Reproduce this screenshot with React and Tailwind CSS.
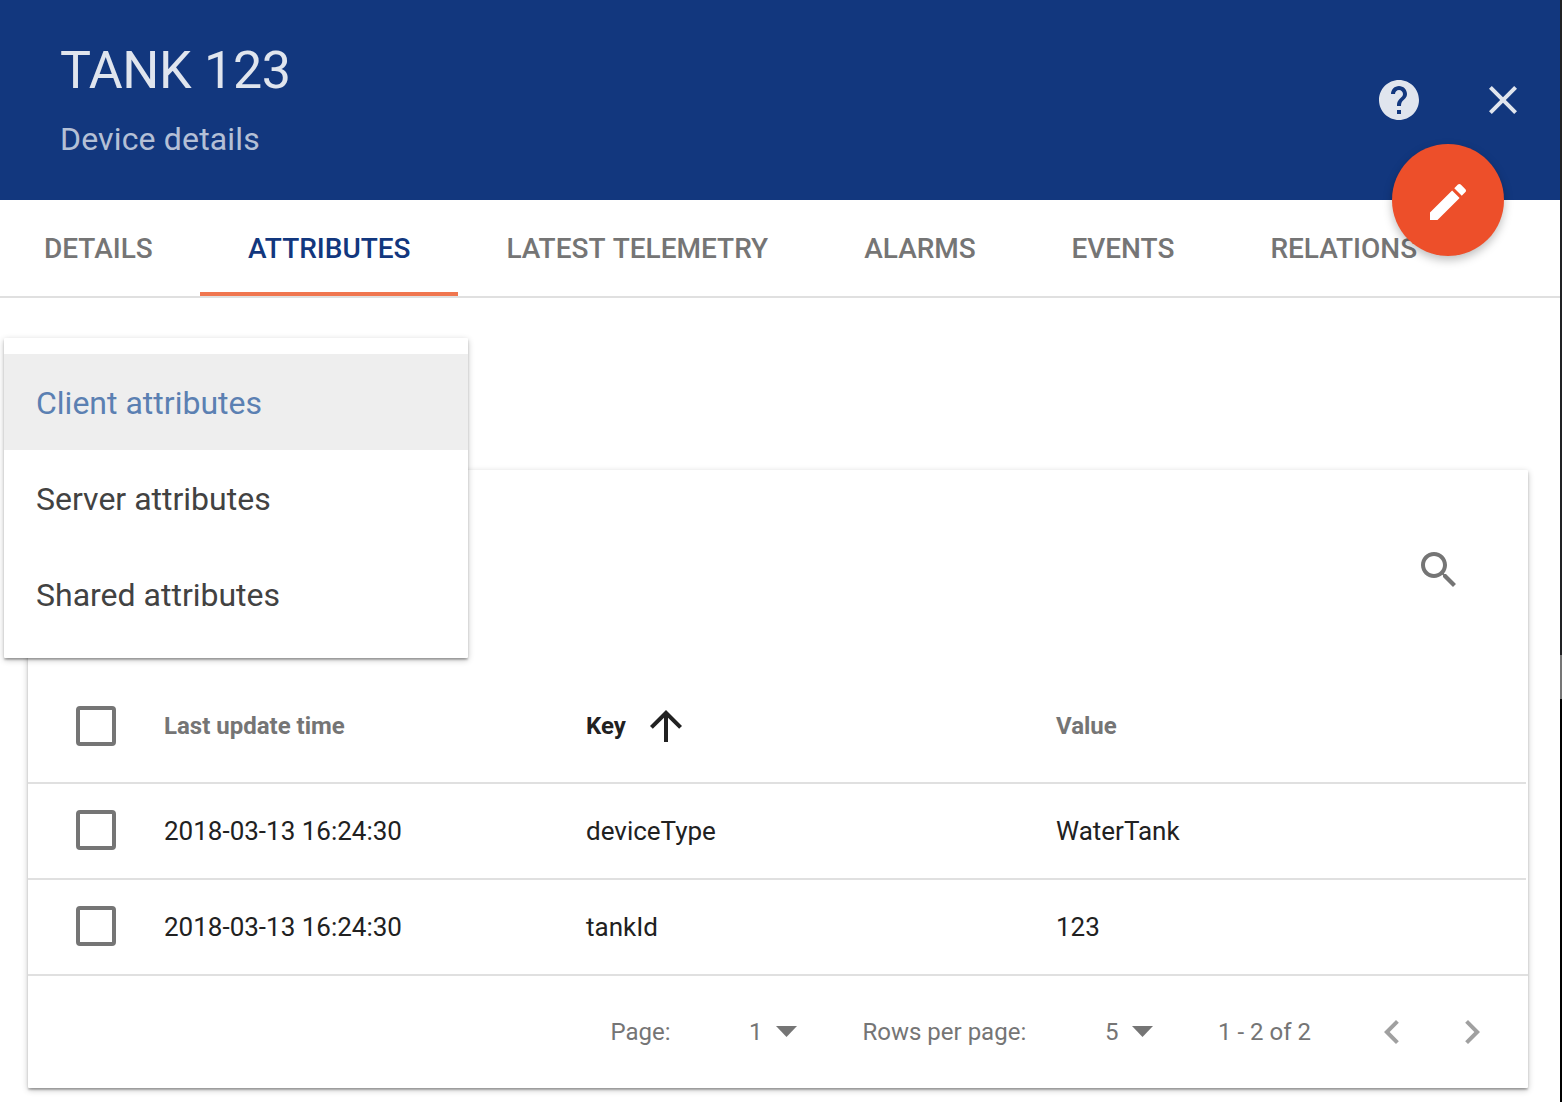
import React from 'react';

const PATHS = {
  help: 'M12 2C6.48 2 2 6.48 2 12s4.48 10 10 10 10-4.48 10-10S17.52 2 12 2zm1 17h-2v-2h2v2zm2.07-7.75l-.9.92C13.45 12.9 13 13.5 13 15h-2v-.5c0-1.1.45-2.1 1.17-2.83l1.24-1.26c.37-.36.59-.86.59-1.41 0-1.1-.9-2-2-2s-2 .9-2 2H8c0-2.21 1.79-4 4-4s4 1.79 4 4c0 .88-.36 1.68-.93 2.25z',
  close: 'M19 6.41L17.59 5 12 10.59 6.41 5 5 6.41 10.59 12 5 17.59 6.41 19 12 13.41 17.59 19 19 17.59 13.41 12z',
  edit: 'M3 17.25V21h3.75L17.81 9.94l-3.75-3.75L3 17.25zM20.71 7.04c.39-.39.39-1.02 0-1.41l-2.34-2.34c-.39-.39-1.02-.39-1.41 0l-1.83 1.83 3.75 3.75 1.83-1.83z',
  search: 'M15.5 14h-.79l-.28-.27C15.41 12.59 16 11.11 16 9.5 16 5.91 13.09 3 9.5 3S3 5.91 3 9.5 5.91 16 9.5 16c1.61 0 3.09-.59 4.23-1.57l.27.28v.79l5 4.99L20.49 19l-4.99-5zm-6 0C7.01 14 5 11.99 5 9.5S7.01 5 9.5 5 14 7.01 14 9.5 11.99 14 9.5 14z',
  up: 'M4 12l1.41 1.41L11 7.83V20h2V7.83l5.58 5.59L20 12l-8-8-8 8z',
  prev: 'M15.41 7.41L14 6l-6 6 6 6 1.41-1.41L10.83 12z',
  next: 'M10 6L8.59 7.41 13.17 12l-4.58 4.59L10 18l6-6z',
};

function Icon({ name, className = '' }) {
  return (
    <svg viewBox="0 0 24 24" fill="currentColor" className={`size-12 shrink-0 ${className}`}>
      <path d={PATHS[name]} />
    </svg>
  );
}

function Caret() {
  return (
    <svg viewBox="0 0 21 11" fill="currentColor" className="w-[21px] h-[11px] mb-px shrink-0">
      <path d="M0 0h21L10.5 11z" />
    </svg>
  );
}

const TABS = [
  { label: 'DETAILS', width: 'w-[204px] -ml-1' },
  { label: 'ATTRIBUTES', width: 'w-[258.4px]', active: true },
  { label: 'LATEST TELEMETRY', width: 'w-[357.8px]' },
  { label: 'ALARMS', width: 'w-[207.2px]' },
  { label: 'EVENTS', width: 'w-[199px]' },
  { label: 'RELATIONS', width: 'w-[244px]' },
];

const ROWS = [
  { time: '2018-03-13 16:24:30', key: 'deviceType', value: 'WaterTank' },
  { time: '2018-03-13 16:24:30', key: 'tankId', value: '123' },
];

const OPTIONS = ['Client attributes', 'Server attributes', 'Shared attributes'];

const GRID = 'grid grid-cols-[136px_422px_470px_1fr] items-center mr-0.5 border-b-2 border-[#e0e0e0]';

const RAISED = 'bg-white rounded-[1px] shadow-[0_2px_6px_rgba(0,0,0,0.24),0_2px_2px_rgba(0,0,0,0.2),0_3px_2px_-2px_rgba(0,0,0,0.14)]';

function Checkbox({ className = '' }) {
  return <span className={`block ml-12 size-10 rounded-[4px] border-4 border-[#757575] ${className}`} />;
}

function Header() {
  return (
    <header className="relative h-[200px] bg-[#12377e] flex justify-between">
      <div className="pl-[60px] pt-[39px]">
        <h1 className="text-[52px] leading-[64px] tracking-[-0.006em] text-white/[0.87]">TANK 123</h1>
        <p className="mt-4 text-[32px] leading-10 tracking-[0.005em] text-white/70">Device details</p>
      </div>
      <div className="flex gap-14 pt-[76px] pr-[33px] text-white/[0.87]">
        <Icon name="help" />
        <Icon name="close" />
      </div>
      <button className="absolute right-14 top-36 z-10 size-28 rounded-full bg-[#ed4f2a] text-white flex items-center justify-center pt-1 shadow-[0_4px_10px_rgba(0,0,0,0.26)]">
        <Icon name="edit" />
      </button>
    </header>
  );
}

function Tabs() {
  return (
    <nav className="flex h-[98px] border-b-2 border-[#e0e0e0] text-[28px] font-medium text-[#757575]">
      {TABS.map((t) => (
        <div
          key={t.label}
          className={`${t.width} shrink-0 pl-12 h-24 leading-[98px] whitespace-nowrap [word-spacing:1.5px] border-b-4 ${t.active ? 'text-[#12377e] border-[#f0764f]' : 'border-transparent'}`}
        >
          {t.label}
        </div>
      ))}
    </nav>
  );
}

function Menu() {
  return (
    <ul className={`absolute left-1 top-10 w-[464px] h-80 py-4 ${RAISED}`}>
      {OPTIONS.map((o, i) => (
        <li
          key={o}
          className={`h-24 pl-8 pt-0.5 flex items-center text-[32px] ${i === 0 ? 'bg-[#eeeeee] text-[#5b80b2]' : 'text-[#424242]'}`}
        >
          {o}
        </li>
      ))}
    </ul>
  );
}

function Footer() {
  return (
    <div className="-mt-0.5 h-[114px] border-t-2 border-[#e0e0e0] flex items-center text-2xl text-[#757575] whitespace-nowrap">
      <span className="ml-[582.5px] w-[138.5px]">Page:</span>
      <span className="w-[27px]">1</span>
      <Caret />
      <span className="ml-[65.5px] w-[242.5px]">Rows per page:</span>
      <span className="w-[27px]">5</span>
      <Caret />
      <span className="ml-[65px] w-[150px]">1 - 2 of 2</span>
      <Icon name="prev" className="text-[#a0a0a0]" />
      <Icon name="next" className="ml-8 text-[#a0a0a0]" />
    </div>
  );
}

export default function App() {
  return (
    <div className="flex w-[1562px] h-[1102px] overflow-hidden bg-white font-[Roboto,sans-serif]">
      <div className="w-[1560px] shrink-0">
        <Header />
        <Tabs />
        <main className="relative pt-[172px] pl-7 pr-8">
          <section className={`h-[618px] ${RAISED}`}>
            <div className="h-[200px] pt-[76px] pr-[65px] flex justify-end text-[#757575]">
              <Icon name="search" />
            </div>
            <div className={`${GRID} h-[114px] text-2xl font-bold text-[#757575]`}>
              <Checkbox />
              <span>Last update time</span>
              <span className="flex items-center gap-4 text-[#212121]">
                Key
                <Icon name="up" />
              </span>
              <span>Value</span>
            </div>
            {ROWS.map((r) => (
              <div key={r.key} className={`${GRID} h-24 text-[26px] text-[#212121]`}>
                <Checkbox className="mb-0.5" />
                <span>{r.time}</span>
                <span>{r.key}</span>
                <span>{r.value}</span>
              </div>
            ))}
            <Footer />
          </section>
          <Menu />
        </main>
      </div>
      <div className="w-0.5 shrink-0 bg-black">
        <div className="h-[655px] bg-[#202124]" />
        <div className="h-11 bg-[#757575]" />
      </div>
    </div>
  );
}
